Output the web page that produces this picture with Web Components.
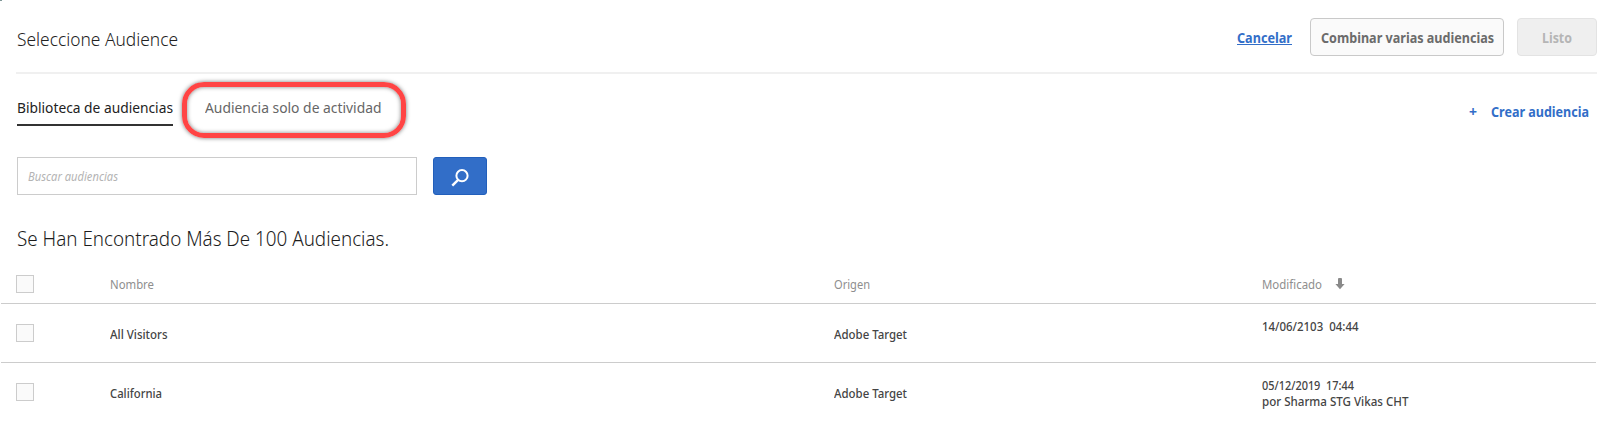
<!DOCTYPE html>
<html lang="es"><head><meta charset="utf-8"><title>Seleccione Audience</title>
<style>html,body{margin:0;background:#fff;overflow:hidden}body{font-family:"Noto Sans","Open Sans",sans-serif;color:#444}</style></head>
<body><audience-picker></audience-picker>
<script>
const define=(name,html,after)=>customElements.define(name,class extends HTMLElement{
  constructor(){super();this.attachShadow({mode:'open'}).innerHTML=html}
  connectedCallback(){if(after)after.call(this)}
});
// A single line of text condensed to the width given in "w"
define('fit-text',`<style>:host{display:block;white-space:pre;height:20px;line-height:20px;flex:none}span{display:inline-block;transform-origin:0 50%}</style><span><slot></slot></span>`,function(){
  const w=+this.getAttribute('w'),s=this.shadowRoot.querySelector('span');
  this.style.width=w+'px';
  const fit=()=>{s.style.transform='none';const n=s.getBoundingClientRect().width;if(n)s.style.transform=`scaleX(${w/n})`};
  fit();requestAnimationFrame(fit);
});
define('check-box',`<style>:host{display:block;box-sizing:border-box;width:18px;height:18px;border:1px solid #ccc;background:#fafafa}</style>`);
define('ui-button',`<style>:host{display:flex;box-sizing:border-box;height:38px;border:1px solid #c9c9c9;border-radius:4px;background:#fafafa;color:#6b6b6b;align-items:center;justify-content:center;font-size:14.5px;font-weight:700}
:host([disabled]){background:#efefef;border-color:#e3e3e3;color:#b5b5b5}</style><slot></slot>`);
define('picker-header',`<style>:host{display:flex;box-sizing:border-box;height:74px;margin-left:16px;padding:18px 0 0 1px;border-bottom:2px solid #f0f0f0;align-items:flex-start}
.title{font-size:18.7px;font-weight:300;color:#222;margin-top:11px}.sp{flex:1}
.cancel{font-size:14.5px;font-weight:700;color:#326ec8;margin:9px 18px 0 0;height:17px;border-bottom:1px solid #326ec8;line-height:20px}
ui-button.combine{width:194px;margin-right:13px}ui-button.done{width:80px}</style>
<fit-text class="title" w="161">Seleccione Audience</fit-text><div class="sp"></div>
<fit-text class="cancel" w="55">Cancelar</fit-text>
<ui-button class="combine"><fit-text w="173">Combinar varias audiencias</fit-text></ui-button>
<ui-button class="done" disabled><fit-text w="30">Listo</fit-text></ui-button>`);
define('library-tab',`<style>:host{display:block;box-sizing:border-box;position:relative;height:52px;padding-top:23px;font-size:15.3px;color:#666}
:host([active]){color:#222;border-bottom:2px solid #323232}
:host([marked])::after{content:"";position:absolute;box-sizing:border-box;left:-23px;top:8px;width:224px;height:56px;border:5px solid #ff4444;border-radius:22px;box-shadow:0 0 4px rgba(0,0,0,.55),inset 0 0 4px rgba(0,0,0,.5)}</style><slot></slot>`);
define('tab-bar',`<style>:host{display:flex;height:83px;padding:0 8px 0 17px;align-items:flex-start}.gap{width:32px}.sp{flex:1}
.create{display:flex;gap:14px;margin-top:27px;color:#326ec8;font-size:14.5px;font-weight:700}</style>
<library-tab active><fit-text w="156">Biblioteca de audiencias</fit-text></library-tab><div class="gap"></div>
<library-tab marked><fit-text w="176.5">Audiencia solo de actividad</fit-text></library-tab><div class="sp"></div>
<div class="create"><fit-text w="8">+</fit-text><fit-text w="98">Crear audiencia</fit-text></div>`);
define('search-bar',`<style>:host{display:flex;padding-left:17px;gap:16px;height:38px}
.field{box-sizing:border-box;width:400px;border:1px solid #ccc;padding:9px 10px 7px;font-size:12.5px;font-style:italic;color:#b4b4b4}
.go{box-sizing:border-box;width:54px;border:1px solid #225fbb;border-radius:3px;background:#326ec8;display:flex;align-items:center;justify-content:center}svg{display:block;margin-top:3px}</style>
<div class="field"><fit-text w="90">Buscar audiencias</fit-text></div>
<div class="go"><svg width="18" height="18" viewBox="0 0 18 18" fill="none" stroke="#fff" stroke-width="2"><circle cx="11" cy="6.7" r="5.6"/><path d="M7.1 10.8 1.3 16.6" stroke-width="2.4"/></svg></div>`);
define('table-row',`<style>:host{display:grid;box-sizing:border-box;grid-template-columns:94px 723.5px 428.5px 1fr;height:59px;margin:0 1px;padding:20px 0 0 15px;border-bottom:1px solid #ccc;font-size:12.8px;align-items:start;font-weight:500}
:host([head]){height:43px;padding-top:14px;color:#8e8e8e;font-weight:400}
:host([head]) ::slotted(.cell){margin-top:-1px}
::slotted(.cell){margin-top:0}::slotted(.date){margin-top:-8px}
</style><slot></slot>`);
define('audience-table',`<style>:host{display:block}.sort{display:flex;gap:13px}.date fit-text{height:16px;line-height:20px}svg{margin-top:4px}
table-row:not([head]) fit-text.cell{margin-top:0}table-row[head] .cell{margin-top:-1px}</style>
<table-row head><check-box></check-box><fit-text class="cell" w="44">Nombre</fit-text><fit-text class="cell" w="36">Origen</fit-text><div class="cell sort"><fit-text w="60">Modificado</fit-text><svg width="10" height="12" viewBox="0 0 10 12"><path d="M3 1Q3 0 4 0H6Q7 0 7 1V6H9.6L5 11.3.4 6H3Z" fill="#8a8a8a"/></svg></div></table-row>
<table-row><check-box></check-box><fit-text class="cell" w="57.5">All Visitors</fit-text><fit-text class="cell" w="73">Adobe Target</fit-text><div class="date"><fit-text w="96.5">14/06/2103  04:44</fit-text></div></table-row>
<table-row><check-box></check-box><fit-text class="cell" w="52">California</fit-text><fit-text class="cell" w="73">Adobe Target</fit-text><div class="date"><fit-text w="92">05/12/2019  17:44</fit-text><fit-text w="146.5">por Sharma STG Vikas CHT</fit-text></div></table-row>`);
define('audience-picker',`<style>:host{display:block;position:relative;width:1597px;height:421px;overflow:hidden}
.corner{position:absolute;left:0;top:0;width:2px;height:1px;background:#7f9797}
.found{margin:33px 0 13px 17px;font-size:20.6px;font-weight:300;color:#1c1c1c;height:20px}</style>
<div class="corner"></div><picker-header></picker-header><tab-bar></tab-bar><search-bar></search-bar>
<fit-text class="found" w="372">Se Han Encontrado Más De 100 Audiencias.</fit-text><audience-table></audience-table>`);
</script></body></html>
